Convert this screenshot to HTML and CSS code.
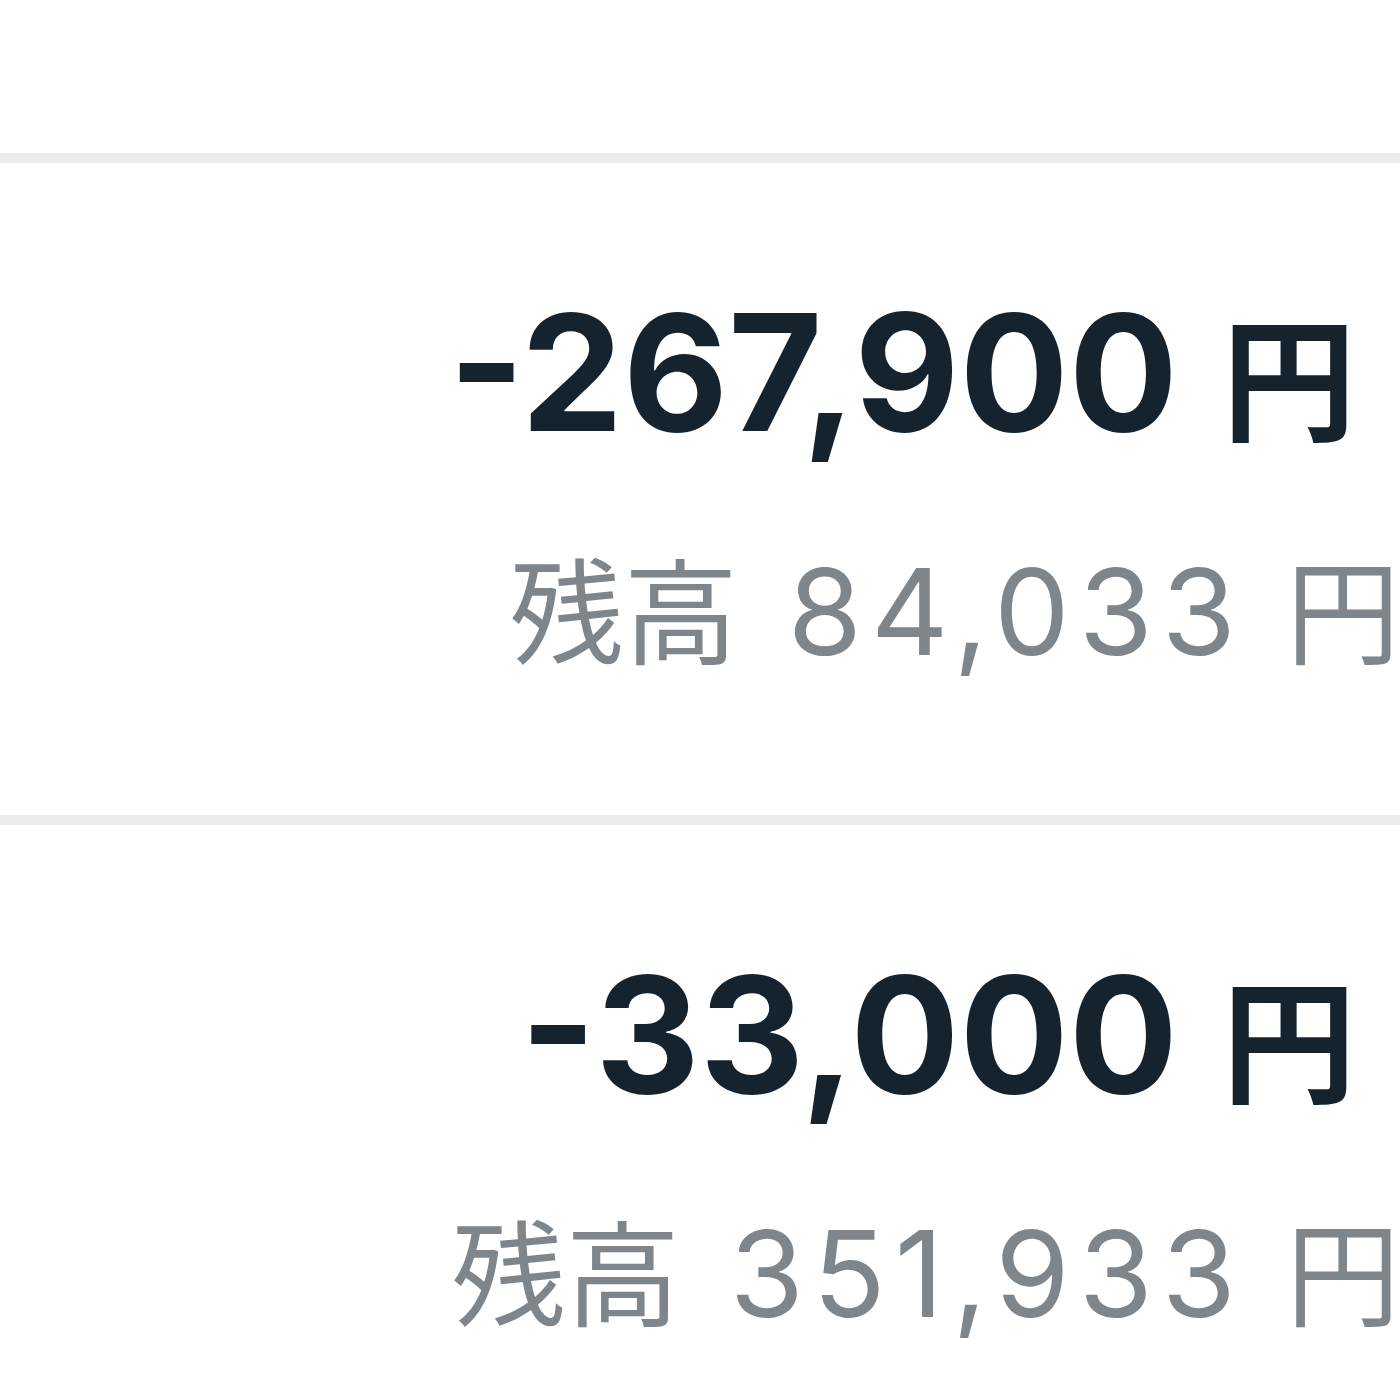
FILE: index.html
```html
<!DOCTYPE html>
<html lang="ja">
<head>
<meta charset="utf-8">
<title>入出金履歴</title>
<link rel="stylesheet" href="styles.css">
</head>
<body>
<main class="history">
  <div class="history-tail"></div>

  <section class="entry">
    <div class="amount">
      <span class="amount-value">-267,900</span>
      <span class="amount-unit">円</span>
    </div>
    <div class="balance">
      <span class="balance-label">残高</span>
      <span class="balance-value">84,033</span>
      <span class="balance-unit">円</span>
    </div>
  </section>

  <section class="entry">
    <div class="amount">
      <span class="amount-value">-33,000</span>
      <span class="amount-unit">円</span>
    </div>
    <div class="balance">
      <span class="balance-label">残高</span>
      <span class="balance-value">351,933</span>
      <span class="balance-unit">円</span>
    </div>
  </section>
</main>
</body>
</html>
```

FILE: styles.css
```css
html, body {
  margin: 0;
  padding: 0;
  background: #ffffff;
}

.history {
  width: 1400px;
  height: 1400px;
  overflow: hidden;
}

.history-tail {
  height: 153px;
}

.entry {
  border-top: 10px solid #ebebeb;
  padding: 114px 0 128px;
  display: flex;
  flex-direction: column;
  align-items: flex-end;
}

.amount {
  display: flex;
  align-items: baseline;
  padding-right: 44px;
  color: #14232e;
  line-height: 190px;
}

.amount-value {
  font-family: "Inter", "Liberation Sans", sans-serif;
  font-weight: 700;
  font-size: 162px;
  letter-spacing: 0;
}

.amount-unit {
  font-family: "Noto Sans CJK JP", sans-serif;
  font-weight: 700;
  font-size: 134px;
  line-height: 1;
  margin-left: 44px;
}

.balance {
  display: flex;
  align-items: baseline;
  gap: 50px;
  margin-top: 70px;
  color: #7f868b;
  line-height: 150px;
}

.balance-label,
.balance-unit {
  font-family: "Noto Sans CJK JP", sans-serif;
  font-weight: 400;
  font-size: 114px;
  line-height: 1;
}

.balance-label {
  letter-spacing: 0;
}

.balance-value {
  font-family: "Inter", "Liberation Sans", sans-serif;
  font-weight: 400;
  font-size: 120px;
  letter-spacing: 9px;
  margin-right: -9px;
}
```
